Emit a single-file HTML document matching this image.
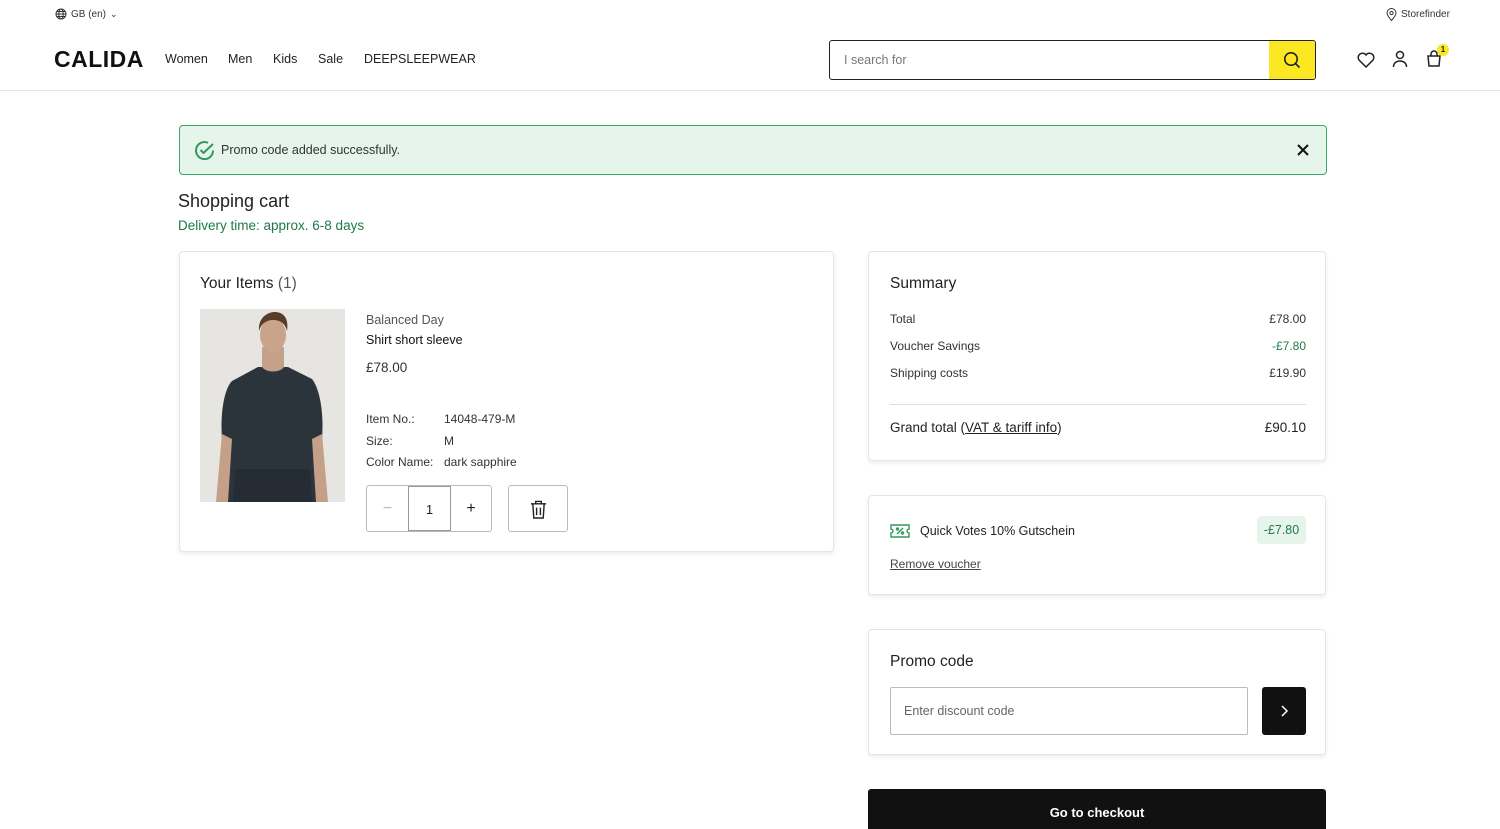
<!DOCTYPE html>
<html><head><meta charset="utf-8"><style>
*{box-sizing:border-box;margin:0;padding:0}
body{width:1500px;height:825px;overflow:hidden;background:#fff;font-family:"Liberation Sans",sans-serif;color:#222;position:relative}
.a{position:absolute}
.card{position:absolute;background:#fff;border:1px solid #e6e6e6;border-radius:4px;box-shadow:0 2px 4px rgba(0,0,0,.08)}
.t13{font-size:12.5px}
</style></head><body>
<div class="a" style="left:55px;top:8px;font-size:10px;color:#333;display:flex;align-items:center;gap:4px">
<svg width="12" height="12" viewBox="0 0 12 12" fill="none" stroke="#333" stroke-width="1"><circle cx="6" cy="6" r="5"/><ellipse cx="6" cy="6" rx="2.2" ry="5"/><path d="M1 6h10M2 3.5h8M2 8.5h8"/></svg>GB (en) <span style="font-size:9px">⌄</span></div>
<div class="a" style="left:1386px;top:8px;font-size:10px;color:#333;display:flex;align-items:center;gap:4px">
<svg width="11" height="13" viewBox="0 0 11 13" fill="none" stroke="#333"><path d="M5.5 12.5C2 8.5 1 6.5 1 5a4.5 4.5 0 0 1 9 0c0 1.5-1 3.5-4.5 7.5z"/><circle cx="5.5" cy="5" r="1.6"/></svg>Storefinder</div>
<div class="a" style="left:54px;top:46px;font-size:23px;font-weight:900;letter-spacing:0.5px;color:#111">CALIDA</div>
<div class="a" style="left:165px;top:52px;font-size:12.5px;color:#222;display:flex;gap:0">
<span style="width:63px">Women</span><span style="width:45px">Men</span><span style="width:45px">Kids</span><span style="width:46px">Sale</span><span>DEEPSLEEPWEAR</span></div>
<div class="a" style="left:829px;top:40px;width:487px;height:40px;border:1px solid #222;border-radius:3px;overflow:hidden">
<div class="a" style="left:14px;top:12px;font-size:12.5px;color:#777">I search for</div>
<div class="a" style="right:0;top:0;width:46px;height:38px;background:#fbe822;display:flex;align-items:center;justify-content:center">
<svg width="18" height="18" viewBox="0 0 18 18" fill="none" stroke="#222" stroke-width="1.6"><circle cx="8" cy="8" r="6.2"/><path d="M12.5 12.5l4 4"/></svg></div></div>
<svg class="a" style="left:1357px;top:52px" width="18" height="16" viewBox="0 0 18 16" fill="none" stroke="#222" stroke-width="1.5"><path d="M9 15L2 8A4 4 0 0 1 9 3a4 4 0 0 1 7 5z"/></svg>
<svg class="a" style="left:1392px;top:50px" width="16" height="18" viewBox="0 0 16 18" fill="none" stroke="#222" stroke-width="1.5"><circle cx="8" cy="5" r="3.5"/><path d="M1.5 17c0-4 3-6 6.5-6s6.5 2 6.5 6"/></svg>
<svg class="a" style="left:1426px;top:50px" width="16" height="17" viewBox="0 0 16 17" fill="none" stroke="#222" stroke-width="1.5"><path d="M2 6h12l-1 10H3z"/><path d="M5 6V4a3 3 0 0 1 6 0v2"/></svg>
<div class="a" style="left:1437px;top:44px;width:12px;height:12px;border-radius:50%;background:#fbe822;font-size:8px;font-weight:bold;text-align:center;line-height:12px">1</div>
<div class="a" style="left:0;top:90px;width:1500px;height:1px;background:#e5e5e5"></div>

<div class="a" style="left:179px;top:125px;width:1148px;height:50px;background:#e6f5ec;border:1px solid #3fa766;border-radius:4px">
<svg class="a" style="left:14px;top:14px" width="21" height="21" viewBox="0 0 21 21" fill="none" stroke="#2f9a5a" stroke-width="2"><path d="M19 10.5A8.5 8.5 0 1 1 14 2.8"/><path d="M6.5 10l3 3L19 4"/></svg>
<div class="a t13" style="left:41px;top:17px;color:#333">Promo code added successfully.</div>
<svg class="a" style="left:1116px;top:17px" width="14" height="14" viewBox="0 0 14 14" stroke="#111" stroke-width="2"><path d="M2 2l10 10M12 2L2 12"/></svg></div>
<div class="a" style="left:178px;top:191px;font-size:18px;color:#222">Shopping cart</div>
<div class="a" style="left:178px;top:218px;font-size:13.5px;color:#1e7a48">Delivery time: approx. 6-8 days</div>

<div class="card" style="left:179px;top:251px;width:655px;height:301px">
<div class="a" style="left:20px;top:23px;font-size:15.5px">Your Items <span style="color:#555">(1)</span></div>
<svg class="a" style="left:20px;top:57px" width="145" height="193" viewBox="0 0 145 193"><rect width="145" height="193" fill="#e7e5e1"/>
<path d="M28 193L22 130C20 105 24 80 32 72L58 58L88 58L112 70C120 80 124 105 122 130L116 193z" fill="#2b333b"/>
<path d="M22 125L16 193L28 193L32 130z M122 125L128 193L116 193L112 130z" fill="#c4a088"/>
<path d="M62 38L62 58C66 64 80 64 84 58L84 38z" fill="#c4a088"/>
<ellipse cx="73" cy="26" rx="13" ry="17" fill="#c9a38a"/>
<path d="M59 22C58 8 68 3 75 3C84 3 89 10 87 22C85 14 80 11 73 11C66 11 61 15 59 22z" fill="#5a3c2a"/>
<path d="M35 160L110 160L112 193L33 193z" fill="#252c33"/></svg>
<div class="a t13" style="left:186px;top:61px;color:#555">Balanced Day</div>
<div class="a t13" style="left:186px;top:81px;color:#111">Shirt short sleeve</div>
<div class="a" style="left:186px;top:108px;font-size:13.5px;color:#333">£78.00</div>
<div class="a" style="left:186px;top:157px;font-size:12px;color:#333;line-height:21.5px">Item No.:<br>Size:<br>Color Name:</div>
<div class="a" style="left:264px;top:157px;font-size:12px;color:#333;line-height:21.5px">14048-479-M<br>M<br>dark sapphire</div>
<div class="a" style="left:186px;top:233px;width:126px;height:47px;border:1px solid #bbb;border-radius:3px;display:flex">
<div style="width:41px;text-align:center;line-height:45px;color:#bbb">−</div>
<div style="width:43px;text-align:center;line-height:45px;border:1px solid #999;font-size:13px">1</div>
<div style="flex:1;text-align:center;line-height:45px;font-size:16px">+</div></div>
<div class="a" style="left:328px;top:233px;width:60px;height:47px;border:1px solid #bbb;border-radius:3px">
<svg class="a" style="left:21px;top:14px" width="17" height="19" viewBox="0 0 18 20" fill="none" stroke="#222" stroke-width="1.5"><path d="M1 4h16M6 4V1.5h6V4M3 4l1 15h10l1-15M7 8v8M11 8v8"/></svg></div>
</div>

<div class="card" style="left:868px;top:251px;width:458px;height:210px">
<div class="a" style="left:21px;top:23px;font-size:15.5px">Summary</div>
<div class="a" style="left:21px;top:54px;width:416px;font-size:12px;line-height:27px;color:#333">
<div style="display:flex;justify-content:space-between"><span>Total</span><span>£78.00</span></div>
<div style="display:flex;justify-content:space-between"><span>Voucher Savings</span><span style="color:#1e7a48">-£7.80</span></div>
<div style="display:flex;justify-content:space-between"><span>Shipping costs</span><span>£19.90</span></div></div>
<div class="a" style="left:21px;top:152px;width:416px;height:1px;background:#ddd"></div>
<div class="a" style="left:21px;top:168px;width:416px;font-size:13.5px;display:flex;justify-content:space-between"><span>Grand total (<u>VAT &amp; tariff info</u>)</span><span>£90.10</span></div>
</div>

<div class="card" style="left:868px;top:495px;width:458px;height:100px">
<svg class="a" style="left:21px;top:28px" width="20" height="14" viewBox="0 0 20 14" fill="none" stroke="#2f9a5a" stroke-width="1.4"><path d="M1 1h18v4a2 2 0 0 0 0 4v4H1V9a2 2 0 0 0 0-4z"/><path d="M7 10l6-6"/><circle cx="7.5" cy="5" r="1"/><circle cx="12.5" cy="9" r="1"/></svg>
<div class="a t13" style="left:51px;top:28px">Quick Votes 10% Gutschein</div>
<div class="a" style="left:388px;top:20px;width:49px;height:28px;background:#e6f5ec;border-radius:4px;font-size:12.5px;color:#1e7a48;text-align:center;line-height:28px">-£7.80</div>
<div class="a" style="left:21px;top:61px;font-size:12px;color:#444;text-decoration:underline">Remove voucher</div>
</div>

<div class="card" style="left:868px;top:629px;width:458px;height:126px">
<div class="a" style="left:21px;top:23px;font-size:15.5px">Promo code</div>
<div class="a" style="left:21px;top:57px;width:358px;height:48px;border:1px solid #bbb;border-radius:2px;font-size:12.5px;color:#666;padding:16px 13px">Enter discount code</div>
<div class="a" style="left:393px;top:57px;width:44px;height:48px;background:#111;border-radius:3px">
<svg class="a" style="left:17px;top:18px" width="10" height="12" viewBox="0 0 10 12" fill="none" stroke="#fff" stroke-width="1.5"><path d="M3 1l5 5-5 5"/></svg></div>
</div>

<div class="a" style="left:868px;top:789px;width:458px;height:40px;background:#111;border-radius:3px 3px 0 0;color:#fff;font-size:13px;font-weight:bold;text-align:center;padding-top:16px">Go to checkout</div>
</body></html>
